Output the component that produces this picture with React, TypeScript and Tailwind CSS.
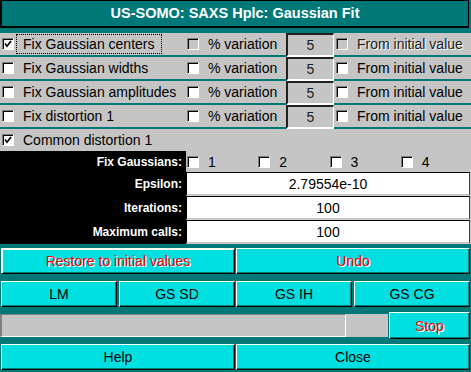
import React from 'react';

const Check = ({ checked = false, gray = false }: { checked?: boolean; gray?: boolean }) => (
  <div
    className={`w-[12px] h-[12px] shrink-0 border border-t-[#808080] border-l-[#808080] border-b-white border-r-white shadow-[inset_1px_1px_0_#000] flex items-center justify-center ${
      gray ? 'bg-[#c5c5c5]' : 'bg-white'
    }`}
  >
    {checked && (
      <svg width="8" height="8" viewBox="0 0 8 8">
        <path d="M1 3.6 L3 6.2 L7 1" fill="none" stroke="#000" strokeWidth="1.7" />
      </svg>
    )}
  </div>
);

const Btn = ({ label, red = false, className = '' }: { label: string; red?: boolean; className?: string }) => (
  <div
    className={`bg-[#00e0e0] border border-t-white border-l-white border-b-black border-r-black shadow-[inset_-1px_-1px_0_#007878] flex items-center justify-center text-[14px] ${
      red ? 'text-[#ff0000] [text-shadow:1px_1px_0_#ffffff]' : 'text-black'
    } ${className}`}
  >
    {label}
  </div>
);

const rows = ['Fix Gaussian centers', 'Fix Gaussian widths', 'Fix Gaussian amplitudes', 'Fix distortion 1'];

export default function App() {
  return (
    <div className="w-[471px] h-[372px] bg-[#007878] overflow-hidden font-['Liberation_Sans',Arial,sans-serif] text-[14px] text-black leading-none">
      <div className="w-[469px] h-[28px] border border-black border-l-2 border-b-2 flex items-center justify-center text-white font-bold text-[14.5px]">
        US-SOMO: SAXS Hplc: Gaussian Fit
      </div>
      <div className="h-[5px]" />
      {rows.map((label, i) => (
        <div key={label} className="h-[24px] bg-[#c5c5c5] border-b-2 border-[#007878] flex">
          <div className="w-[185px] h-[22px] flex items-center pl-[2px]">
            <Check checked={i === 0} />
            <span
              className={`ml-[2px] px-[6px] h-[20px] flex items-center border whitespace-nowrap ${
                i === 0 ? 'border-dotted border-black' : 'border-transparent'
              }`}
            >
              {label}
            </span>
          </div>
          <div className="w-[101px] h-[22px] flex items-center pl-[2px]">
            <Check gray={i === 0} />
            <span className="ml-[9px] whitespace-nowrap">% variation</span>
          </div>
          <div className="w-[48px] h-[24px] shrink-0 bg-[#c5c5c5] border-2 border-t-[#202020] border-l-[#202020] border-b-white border-r-white border-r flex items-center justify-center text-[#202020]">
            5
          </div>
          <div className="flex-1 h-[22px] flex items-center pl-[2px]">
            <Check gray={i === 0} />
            <span
              className={`ml-[9px] whitespace-nowrap ${i === 0 ? 'text-[#202020] [text-shadow:1px_1px_0_#ffffff]' : ''}`}
            >
              From initial value
            </span>
          </div>
        </div>
      ))}
      <div className="h-[22px] bg-[#c5c5c5] flex items-center pl-[2px]">
        <Check checked />
        <span className="ml-[9px]">Common distortion 1</span>
      </div>
      <div className="flex h-[93px]">
        <div className="w-[186px] bg-black text-white font-bold text-[12px] flex flex-col items-end pr-[4px]">
          <div className="h-[21px] flex items-center">Fix Gaussians:</div>
          <div className="h-[24px] flex items-center">Epsilon:</div>
          <div className="h-[24px] flex items-center">Iterations:</div>
          <div className="h-[24px] flex items-center">Maximum calls:</div>
        </div>
        <div className="flex-1 bg-[#c5c5c5]">
          <div className="h-[21px] grid grid-cols-4">
            {['1', '2', '3', '4'].map((n) => (
              <div key={n} className="flex items-center pl-[1px]">
                <Check />
                <span className="ml-[9px]">{n}</span>
              </div>
            ))}
          </div>
          {['2.79554e-10', '100', '100'].map((v, i) => (
            <div
              key={i}
              className="w-[284px] h-[24px] bg-white border border-t-black border-l-black border-r-[#404040] border-b-2 border-b-[#c8c8c8] flex items-center justify-center"
            >
              {v}
            </div>
          ))}
        </div>
      </div>
      <div className="h-[4px]" />
      <div className="flex h-[26px] pl-[1px] gap-[1px]">
        <Btn label="Restore to initial values" red className="w-[234px] border-l-black shadow-[inset_1px_1px_0_#ffffff,inset_-1px_-1px_0_#007878]" />
        <Btn label="Undo" red className="w-[234px]" />
      </div>
      <div className="h-[7px]" />
      <div className="flex h-[26px]">
        <Btn label="LM" className="w-[116px] ml-[1px]" />
        <Btn label="GS SD" className="w-[116px] ml-[2px]" />
        <Btn label="GS IH" className="w-[116px] ml-[1px]" />
        <Btn label="GS CG" className="w-[116px] ml-[2px]" />
      </div>
      <div className="h-[5px]" />
      <div className="flex h-[27px] items-center">
        <div className="w-[388px] h-[23px] bg-[#c5c5c5] flex">
          <div className="w-[346px] h-full border border-t-[#808080] border-l-2 border-l-[#808080] border-b-white border-r-white" />
        </div>
        <Btn label="Stop" red className="w-[81px] h-[27px] ml-[1px]" />
      </div>
      <div className="h-[5px]" />
      <div className="flex h-[26px] pl-[1px] gap-[1px]">
        <Btn label="Help" className="w-[234px]" />
        <Btn label="Close" className="w-[234px]" />
      </div>
    </div>
  );
}
